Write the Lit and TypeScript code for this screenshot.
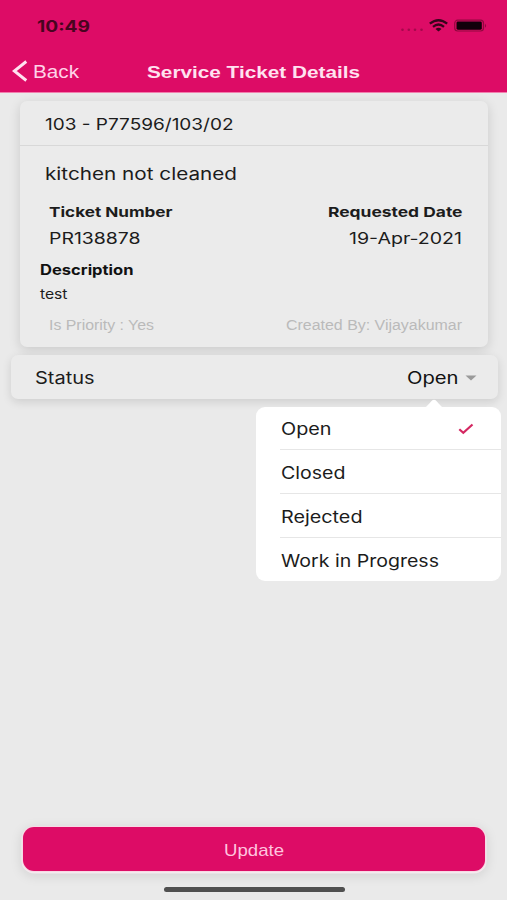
import { LitElement, html, css, svg } from "lit";
import { customElement, property } from "lit/decorators.js";

/** A single line of text set to an exact advance width. */
@customElement("wide-text")
class WideText extends LitElement {
  @property() text = "";
  @property({ type: Number }) width = 100;
  @property({ type: Number }) base = 15;
  static styles = css`
    :host { display: block; flex: none; height: 20px; }
    svg { display: block; overflow: visible; fill: currentColor; }
  `;
  render() {
    return html`<svg width=${this.width} height="20">
      ${svg`<text x="0" y=${this.base} textLength=${this.width} lengthAdjust="spacingAndGlyphs">${this.text}</text>`}
    </svg>`;
  }
}

@customElement("status-menu")
class StatusMenu extends LitElement {
  static styles = css`
    :host {
      display: block; width: 245px; height: 174px; border-radius: 9px;
      background: #fff; color: #1c1c1c; font: 16.8px Inter, sans-serif;
    }
    .tip { position: absolute; left: 167px; top: -8px; display: block; }
    .row {
      height: 44px; box-sizing: border-box; margin-left: 24px; padding: 0 27px 0 0.6px;
      display: flex; align-items: center; justify-content: space-between;
      border-bottom: 1px solid #e6e6e6;
    }
    .row:first-of-type { height: 43px; }
    .row:last-child { border-bottom: 0; height: 43px; }
    .check { display: block; margin-top: 2px; }
  `;
  options = [
    { label: "Open", w: 50.5, on: true },
    { label: "Closed", w: 64.5, on: false },
    { label: "Rejected", w: 81.5, on: false },
    { label: "Work in Progress", w: 158, on: false },
  ];
  render() {
    return html`
      <svg class="tip" width="22" height="9"><path d="M0 9C4 8.5 6 4.500 9.300 1.300Q11 0 12.700 1.300C16 4.500 18 8.500 22 9Z" fill="#fff" /></svg>
      ${this.options.map(
        (o) => html`<div class="row">
          <wide-text .text=${o.label} .width=${o.w} .base=${16.8}></wide-text>
          ${o.on
            ? html`<svg class="check" width="16" height="12" viewBox="0 0 16 12"><path d="M1.300 6.200L5.300 9.800L14.500 1.500" fill="none" stroke="#d42761" stroke-width="2.200" /></svg>`
            : ""}
        </div>`
      )}
    `;
  }
}

@customElement("app-root")
class AppRoot extends LitElement {
  static styles = css`
    :host {
      display: flex; flex-direction: column; box-sizing: border-box; height: 900px;
      background: #eaeaea; color: #1c1c1c; font-family: Inter, sans-serif; overflow: hidden;
    }
    .helv { font-family: "Liberation Sans", sans-serif; }
    header { flex: none; height: 93px; box-sizing: border-box; background: #dd0c66; border-bottom: 1px solid #f27fae; }
    .system { display: flex; justify-content: space-between; align-items: center; height: 52px; padding: 0 20px 0 37px; }
    .clock { font-weight: 700; font-size: 15.5px; color: #480420; }
    .signals { display: flex; margin-bottom: 1px; }
    .nav { display: flex; height: 38px; align-items: center; padding: 0 0 0 12px; color: #ffd3e8; }
    .nav .back { font-size: 17.5px; margin-left: 4.5px; }
    .nav .title { font-size: 17px; font-weight: 700; margin-left: 68.5px; color: #ffe2f0; }
    .card {
      flex: none; margin: 8px 19px 0 20px; height: 246px; border-radius: 7px; background: #ebebeb;
      box-shadow: 0 3px 12px rgba(0, 0, 0, 0.14);
    }
    .unit { height: 45px; box-sizing: border-box; padding: 12px 24px 0 24.5px; border-bottom: 1px solid #d8d8d8; font-size: 16.3px; }
    .subject { padding: 17px 25px 0; font-size: 17.2px; }
    .pair { display: flex; justify-content: space-between; padding: 0 26px 0 28.5px; }
    .labels { margin-top: 19px; font-size: 13.8px; font-weight: 700; }
    .values { margin-top: 6px; font-size: 15.4px; }
    .desc { margin: 12px 20px 0; font-size: 14.2px; font-weight: 700; color: #111; }
    .body { margin: 4px 20px 0; font-size: 13.8px; }
    .meta { margin-top: 11px; font-size: 13.8px; color: #bababa; }
    .status {
      position: relative; flex: none; display: flex; align-items: center; justify-content: space-between;
      height: 44px; box-sizing: border-box; margin: 8px 9px 0 11px; padding: 1px 21px 0 24px;
      border-radius: 7px; background: #ebebeb; box-shadow: 0 3px 10px rgba(0, 0, 0, 0.12); font-size: 16.9px;
    }
    .choice { display: flex; align-items: center; gap: 7px; color: #111; }
    status-menu { position: absolute; left: 245px; top: 52px; }
    .update {
      margin: auto 22px 0 23px; flex: none; height: 44px; box-sizing: content-box; border: 0; padding: 0;
      display: flex; align-items: center; justify-content: center; border-radius: 11px;
      background: #dd0c66; color: #ffc4df; font-size: 16.2px;
      box-shadow: 0 0 0 1px #f8d9e5, 0 1px 0 1.5px #f5eaef, 0 3px 12px 2px rgba(0, 0, 0, 0.1);
    }
    .home { flex: none; width: 181px; height: 5px; border-radius: 3px; background: #505050; margin: 16px 0 8px 164px; }
  `;
  line(cls: string, text: string, width: number, base = 15) {
    return html`<wide-text class=${cls} .text=${text} .width=${width} .base=${base}></wide-text>`;
  }
  render() {
    return html`
      <header>
        <div class="system">
          ${this.line("clock", "10:49", 53, 15.6)}
          <svg class="signals" width="87" height="16" viewBox="0 0 87 16">
            <g fill="#a5084c"><circle cx="2.500" cy="11.700" r="1.300" /><circle cx="8.800" cy="11.700" r="1.300" /><circle cx="15" cy="11.700" r="1.300" /><circle cx="21.500" cy="11.700" r="1.300" /></g>
            <g fill="none" stroke="#35051b" stroke-width="2.300">
              <path d="M29.800 5.700Q38.500-1.300 47.200 5.700" /><path d="M33 8.800Q38.500 4.200 44 8.800" />
            </g>
            <path d="M35.500 11Q38.500 8.500 41.500 11L38.500 13.600Z" fill="#35051b" />
            <rect x="54.700" y="2.200" width="28.800" height="10.800" rx="3" fill="none" stroke="#92083f" stroke-width="1.200" />
            <rect x="56.500" y="3.500" width="25.300" height="8.200" rx="1.400" fill="#12000a" />
            <path d="M85 5.700Q87.200 7.700 85 9.700Z" fill="#92083f" />
          </svg>
        </div>
        <div class="nav">
          <svg width="16" height="22" viewBox="0 0 16 22"><path d="M14.300 1.500L2.300 11L14.300 20.500" fill="none" stroke="#ffe2f0" stroke-width="2.900" /></svg>
          ${this.line("back helv", "Back", 46, 16.6)}
          ${this.line("title helv", "Service Ticket Details", 213, 16.6)}
        </div>
      </header>
      <section class="card">
        <div class="unit">${this.line("", "103 - P77596/103/02", 188.5, 16.6)}</div>
        <div class="subject">${this.line("", "kitchen not cleaned", 192, 16.5)}</div>
        <div class="pair labels">${this.line("", "Ticket Number", 123.5, 15.4)}${this.line("", "Requested Date", 134.5, 15.4)}</div>
        <div class="pair values">${this.line("", "PR138878", 91.5, 15.5)}${this.line("", "19-Apr-2021", 113, 15.5)}</div>
        ${this.line("desc", "Description", 93.5)}
        ${this.line("body", "test", 27.5)}
        <div class="pair meta helv">${this.line("", "Is Priority : Yes", 105)}${this.line("", "Created By: Vijayakumar", 176)}</div>
      </section>
      <section class="status">
        ${this.line("", "Status", 59.5, 16)}
        <div class="choice">
          ${this.line("", "Open", 51.5, 16.2)}
          <svg width="12" height="6"><path d="M.500.500H11.500L6 5.500Z" fill="#9a9a9a" /></svg>
        </div>
        <status-menu></status-menu>
      </section>
      <button class="update helv">${this.line("", "Update", 60, 16.5)}</button>
      <div class="home"></div>
    `;
  }
}
